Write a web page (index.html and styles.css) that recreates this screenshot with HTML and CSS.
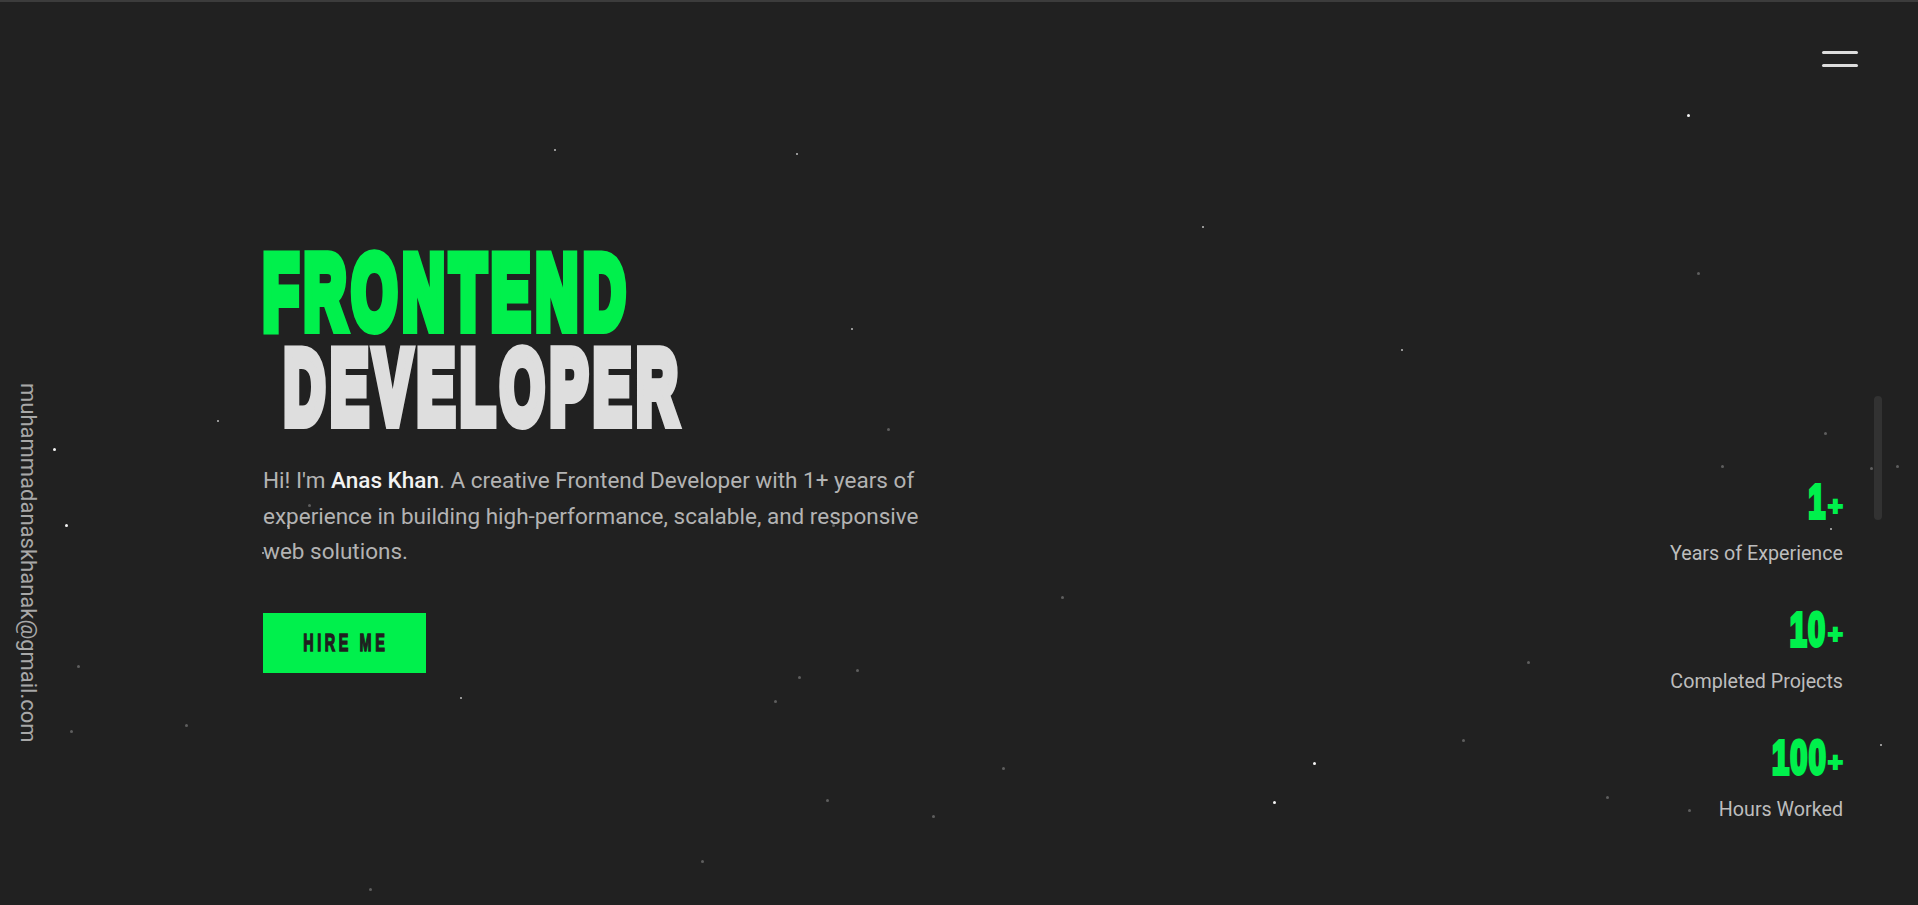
FILE: index.html
```html
<!DOCTYPE html>
<html lang="en">
<head>
<meta charset="utf-8">
<title>Anas Khan — Frontend Developer</title>
<link rel="stylesheet" href="styles.css">
</head>
<body>
<div class="strip"></div>
<div class="page">
  <div class="stars" aria-hidden="true">
    <span class="star b" style="left:1687px;top:112px"></span>
    <span class="star n" style="left:554px;top:147px"></span>
    <span class="star n" style="left:796px;top:151px"></span>
    <span class="star n" style="left:1202px;top:224px"></span>
    <span class="star d" style="left:1697px;top:270px"></span>
    <span class="star n" style="left:851px;top:326px"></span>
    <span class="star n" style="left:1401px;top:347px"></span>
    <span class="star n" style="left:217px;top:418px"></span>
    <span class="star d" style="left:887px;top:426px"></span>
    <span class="star b" style="left:53px;top:446px"></span>
    <span class="star d" style="left:1824px;top:430px"></span>
    <span class="star d" style="left:1721px;top:463px"></span>
    <span class="star d" style="left:1896px;top:463px"></span>
    <span class="star d" style="left:1870px;top:465px"></span>
    <span class="star b" style="left:65px;top:522px"></span>
    <span class="star d" style="left:832px;top:522px"></span>
    <span class="star d" style="left:308px;top:502px"></span>
    <span class="star n" style="left:287px;top:523px"></span>
    <span class="star n" style="left:262px;top:550px"></span>
    <span class="star n" style="left:1830px;top:526px"></span>
    <span class="star d" style="left:1061px;top:594px"></span>
    <span class="star d" style="left:77px;top:663px"></span>
    <span class="star d" style="left:798px;top:674px"></span>
    <span class="star d" style="left:856px;top:667px"></span>
    <span class="star d" style="left:1527px;top:659px"></span>
    <span class="star n" style="left:460px;top:695px"></span>
    <span class="star d" style="left:774px;top:698px"></span>
    <span class="star d" style="left:185px;top:722px"></span>
    <span class="star d" style="left:70px;top:728px"></span>
    <span class="star d" style="left:1462px;top:737px"></span>
    <span class="star n" style="left:1880px;top:742px"></span>
    <span class="star d" style="left:1002px;top:765px"></span>
    <span class="star b" style="left:1313px;top:760px"></span>
    <span class="star d" style="left:826px;top:797px"></span>
    <span class="star b" style="left:1273px;top:799px"></span>
    <span class="star d" style="left:1606px;top:794px"></span>
    <span class="star d" style="left:932px;top:813px"></span>
    <span class="star d" style="left:1688px;top:807px"></span>
    <span class="star d" style="left:701px;top:858px"></span>
    <span class="star d" style="left:369px;top:886px"></span>
  </div>

  <header class="topbar">
    <button class="menu" aria-label="Menu"><span></span><span></span></button>
  </header>

  <main class="main">
    <aside class="side">
      <a class="email" href="#">muhammadanaskhanak@gmail.com</a>
    </aside>

    <section class="hero">
      <h1 class="title"><span class="line green"><span class="cond">FRONTEND</span></span><span class="line grey indent"><span class="cond narrow">DEVELOPER</span></span></h1>
      <p class="intro">Hi! I'm <strong>Anas Khan</strong>. A creative Frontend Developer with 1+ years of experience in building high-performance, scalable, and responsive web solutions.</p>
      <a class="btn" href="#"><span class="btn-text">HIRE ME</span></a>
    </section>

    <ul class="stats">
      <li class="stat">
        <div class="num"><span class="digits">1</span><span class="plus">+</span></div>
        <div class="label">Years of Experience</div>
      </li>
      <li class="stat">
        <div class="num"><span class="digits">10</span><span class="plus">+</span></div>
        <div class="label">Completed Projects</div>
      </li>
      <li class="stat">
        <div class="num"><span class="digits">100</span><span class="plus">+</span></div>
        <div class="label">Hours Worked</div>
      </li>
    </ul>
  </main>

  <div class="scroll-pill"></div>
</div>
</body>
</html>
```

FILE: styles.css
```css
* {
  box-sizing: border-box;
  margin: 0;
  padding: 0;
}

html, body {
  height: 100%;
}

body {
  background: #212121;
  font-family: Roboto, "Liberation Sans", Arial, sans-serif;
  overflow: hidden;
}

.strip {
  height: 2px;
  background: #3c3c3c;
}

.page {
  position: relative;
  height: 903px;
}

/* star field */
.stars {
  position: absolute;
  inset: 0;
  pointer-events: none;
}

.star {
  position: absolute;
  width: 2px;
  height: 2px;
  border-radius: 50%;
}

.star.b { width: 3px; height: 3px; background: #f4f4f4; }
.star.n { background: #bdbdbd; }
.star.d { width: 3px; height: 3px; background: #5e5e5e; }

/* header */
.topbar {
  display: flex;
  justify-content: flex-end;
  padding: 49px 60px 0 0;
}

.menu {
  display: flex;
  flex-direction: column;
  gap: 10px;
  background: none;
  border: 0;
  cursor: pointer;
}

.menu span {
  display: block;
  width: 36px;
  height: 3px;
  border-radius: 2px;
  background: #dcdcdc;
}

/* main layout */
.main {
  display: grid;
  grid-template-columns: 263px 1fr auto;
  padding-right: 75px;
}

.side {
  padding: 316px 0 0 17px;
}

.email {
  display: block;
  writing-mode: vertical-rl;
  color: #a8a8a8;
  font-size: 22px;
  line-height: 1;
  text-decoration: none;
}

.hero {
  padding-top: 178px;
}

.title {
  font-family: "Liberation Sans", Arial, sans-serif;
  font-weight: 700;
  font-size: 103px;
  line-height: 95px;
}

.line {
  display: block;
}

.line.green { color: #00f04c; }
.line.grey { color: #dedede; }
.line.indent { padding-left: 21px; }

.cond {
  display: inline-block;
  white-space: nowrap;
  letter-spacing: 10px;
  -webkit-text-stroke: 12px currentColor;
  transform: scaleX(0.564);
  transform-origin: left center;
}

.cond.narrow {
  transform: scaleX(0.55);
}

.intro {
  margin-top: 28px;
  max-width: 690px;
  font-size: 22.5px;
  line-height: 35.5px;
  color: #b3b3b3;
}

.intro strong {
  font-weight: 500;
  color: #f2f2f2;
}

.btn {
  display: flex;
  align-items: center;
  justify-content: center;
  width: 163px;
  height: 60px;
  margin-top: 43px;
  background: #00f04c;
  text-decoration: none;
}

.btn-text {
  display: inline-block;
  padding-left: 6px;
  font-family: "Liberation Sans", Arial, sans-serif;
  font-weight: 700;
  font-size: 24px;
  letter-spacing: 6px;
  color: #1f1f1f;
  -webkit-text-stroke: 1.5px currentColor;
  transform: scaleX(0.6);
}

/* stats */
.stats {
  list-style: none;
  padding-top: 411px;
  display: flex;
  flex-direction: column;
  gap: 38px;
  text-align: right;
}

.num {
  font-family: "Liberation Sans", Arial, sans-serif;
  font-weight: 700;
  font-size: 48px;
  line-height: 48px;
  height: 48px;
  color: #00f04c;
  white-space: nowrap;
}

.digits {
  display: inline-block;
  letter-spacing: 2px;
  margin-right: -2px;
  -webkit-text-stroke: 4px currentColor;
  transform: scaleX(0.64);
  transform-origin: right center;
}

.plus {
  display: inline-block;
  margin-left: 3px;
  font-size: 26px;
  line-height: 0;
  vertical-align: 3px;
  -webkit-text-stroke: 2px currentColor;
}

.label {
  margin-top: 14px;
  font-size: 19.7px;
  line-height: 28px;
  color: #bdbdbd;
}

.scroll-pill {
  position: absolute;
  top: 394px;
  right: 36px;
  width: 8px;
  height: 124px;
  border-radius: 4px;
  background: #323232;
}
```
